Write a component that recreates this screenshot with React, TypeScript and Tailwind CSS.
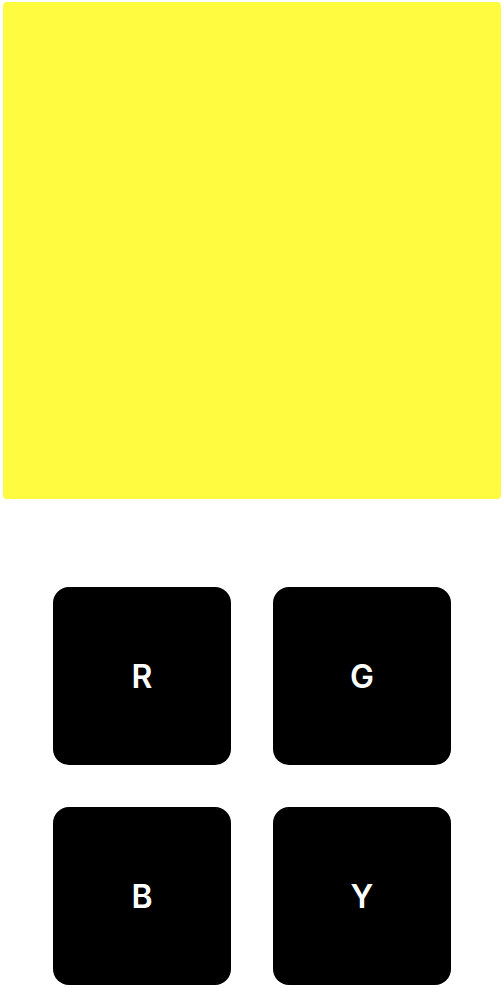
export default function App() {
  const keys = ["R", "G", "B", "Y"];
  return (
    <div className="min-h-screen bg-white font-['Inter',sans-serif]">
      <div className="px-[3px] pt-[2px]">
        <div className="h-[497px] rounded-[4px] bg-[#fffb41]" />
      </div>
      <div className="mt-[88px] flex justify-center">
        <div className="grid grid-cols-2 gap-[42px]">
          {keys.map((k) => (
            <button
              key={k}
              className="flex h-[178px] w-[178px] items-center justify-center rounded-[16px] bg-black pt-[2px] text-[32px] font-semibold text-white"
            >
              {k}
            </button>
          ))}
        </div>
      </div>
    </div>
  );
}
